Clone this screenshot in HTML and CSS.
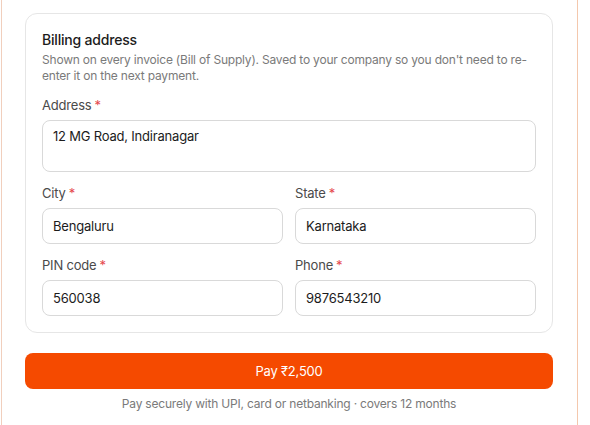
FILE: index.html
```html
<!DOCTYPE html>
<html lang="en">
<head>
    <meta charset="UTF-8">
    <meta name="viewport" content="width=device-width, initial-scale=1.0">
    <title>Billing address</title>
    <link rel="stylesheet" href="styles.css">
</head>
<body>
    <div class="sheet">
        <!-- Billing address card -->
        <section class="card">
            <h2>Billing address</h2>
            <p class="hint">Shown on every invoice (Bill of Supply). Saved to your company so you don't need to re-enter it on the next payment.</p>

            <div class="form-grid">
                <div class="form-group full-width">
                    <label for="address">Address<span class="req">*</span></label>
                    <textarea id="address" rows="2">12 MG Road, Indiranagar</textarea>
                </div>
                <div class="form-group">
                    <label for="city">City<span class="req">*</span></label>
                    <input type="text" id="city" value="Bengaluru">
                </div>
                <div class="form-group">
                    <label for="state">State<span class="req">*</span></label>
                    <input type="text" id="state" value="Karnataka">
                </div>
                <div class="form-group">
                    <label for="pin">PIN code<span class="req">*</span></label>
                    <input type="text" id="pin" value="560038">
                </div>
                <div class="form-group">
                    <label for="phone">Phone<span class="req">*</span></label>
                    <input type="text" id="phone" value="9876543210">
                </div>
            </div>
        </section>

        <button type="button" class="pay">Pay ₹2,500</button>
        <p class="note">Pay securely with UPI, card or netbanking · covers 12 months</p>
    </div>
</body>
</html>
```

FILE: styles.css
```css
body {
    margin: 0;
    font-family: Inter, "Noto Sans", sans-serif;
    letter-spacing: -0.2px;
    background-color: #fff;
    color: #1c1c1c;
}

/* Sheet */
.sheet {
    box-sizing: border-box;
    width: 577px;
    margin-left: 1px;
    padding: 13px 24px 12px 23px;
    border-left: 1px solid #f1cfbd;
    border-right: 1px solid #f4c8ad;
    min-height: 425px;
}

/* Card */
.card {
    border: 1px solid #e6e6e6;
    border-radius: 12px;
    padding: 16px;
}
.card h2 {
    margin: 0;
    font-size: 14px;
    font-weight: 500;
    line-height: 20px;
    color: #1c1c1c;
}
.hint {
    margin: 2px 0 0;
    font-size: 12px;
    line-height: 16px;
    color: #7a7a7a;
}

.form-grid {
    display: grid;
    grid-template-columns: 1fr 1fr;
    column-gap: 12px;
    row-gap: 12px;
    margin-top: 12px;
}
.full-width {
    grid-column: span 2;
}
label {
    display: block;
    font-size: 13px;
    line-height: 18px;
    color: #4a4a4a;
    margin-bottom: 6px;
}
.req {
    color: #e5484d;
    margin-left: 3px;
}
input[type="text"], textarea {
    box-sizing: border-box;
    width: 100%;
    display: block;
    margin: 0;
    font-family: inherit;
    letter-spacing: inherit;
    font-size: 13px;
    color: #1c1c1c;
    background: #fff;
    border: 1px solid #d9d9d9;
    border-radius: 8px;
    padding: 0 10px;
    height: 36px;
}
textarea {
    height: 52px;
    padding: 6px 10px;
    line-height: 18px;
    resize: none;
}

/* Pay button */
.pay {
    display: block;
    width: 100%;
    margin-top: 20px;
    height: 36px;
    border: none;
    border-radius: 8px;
    background-color: #f54a00;
    color: #fff;
    font-family: inherit;
    letter-spacing: inherit;
    font-size: 13px;
    cursor: pointer;
}
.note {
    margin: 7px 0 0;
    text-align: center;
    font-size: 12px;
    line-height: 16px;
    color: #7a7a7a;
}
```
